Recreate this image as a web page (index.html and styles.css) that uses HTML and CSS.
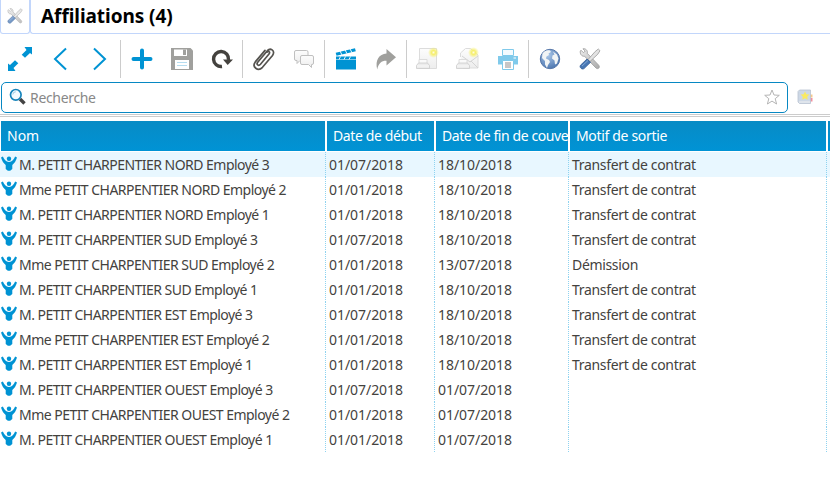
FILE: index.html
```html
<!DOCTYPE html>
<html lang="fr">
<head>
<meta charset="utf-8">
<title>Affiliations</title>
<link rel="stylesheet" href="styles.css">
</head>
<body>
<svg class="defs" aria-hidden="true">
  <defs>
    <linearGradient id="steel" x1="0" y1="0" x2="1" y2="1"><stop offset="0" stop-color="#eee"/><stop offset="1" stop-color="#aaa"/></linearGradient>
    <linearGradient id="paper" x1="0" y1="0" x2="0" y2="1"><stop offset="0" stop-color="#fdfdfd"/><stop offset="1" stop-color="#ededed"/></linearGradient>
    <radialGradient id="globe" cx=".4" cy=".3" r=".75"><stop offset="0" stop-color="#a9c6e8"/><stop offset="1" stop-color="#4a74ae"/></radialGradient>
    <radialGradient id="glow"><stop offset="0" stop-color="#fffce0"/><stop offset=".35" stop-color="#f6ef6c"/><stop offset="1" stop-color="#f6ef6c" stop-opacity="0"/></radialGradient>
  </defs>
  <symbol id="person" viewBox="0 0 16 15"><circle cx="8" cy="2.700" r="2.200"/><path d="M0 1.600 1.900.6C3 3.600 5 6 8 6S13 3.600 14.100.6L16 1.600C15 5 13.400 7.400 11.300 9V13C10 14.300 9 14.800 8 14.800S6 14.300 4.700 13V9C2.600 7.400 1 5 0 1.600Z"/></symbol>
  <symbol id="tools" viewBox="0 0 22 22"><path d="M2 2.200 4.500 4.700 6.200 3 3.900.8C6.500.2 9 2.500 8.300 5.400L19.700 17.200C21.500 19.500 19 21.700 17 20L5.500 8.200C2.800 8.700.8 6 1.300 3Z" fill="url(#steel)" stroke="#999" stroke-width=".8"/><path d="M19.300 1 21 2.700 18.800 6.200 11 13.500 9 11.600 16.200 3.500Z" fill="#e2e2e2" stroke="#999" stroke-width=".8"/><path d="M8 11 11.500 14.300 5 20.600C3 22 0 19.300 1.500 17.200Z" fill="#4777b4" stroke="#315b94" stroke-width=".8"/><path d="m3 18 6-5.500" stroke="#83a7d4"/></symbol>
  <symbol id="printer" viewBox="0 0 14 10"><path d="M3 5V.5h8V5" fill="#fafafa" stroke="#d4d4d4" stroke-width=".8"/><path d="M2.500 4h9l2 2.500v3h-13v-3Z" fill="#ececec" stroke="#ccc" stroke-width=".8"/><path d="M1 7h12" stroke="#f8f8f8"/></symbol>
</svg>

<header class="title">
  <div class="title-tool"><svg width="16" height="16"><use href="#tools"/></svg></div>
  <h1>Affiliations (4)</h1>
</header>

<nav class="toolbar">
  <div class="group">
    <button><svg width="24" height="24" viewBox="0 0 24 24" fill="#0093d3"><path d="M16.500 0H24v7.500l-2-1.500-5 4.800-3.300-3L18.500 3Z"/><path d="M7.500 24H0v-7.500L2 18l5-4.800 3.300 3L5.500 21Z"/></svg></button>
    <button><svg width="24" height="24" viewBox="0 0 24 24" fill="none" stroke="#0093d3" stroke-width="2"><path d="M18 1.500 7 12l11 10.500"/></svg></button>
    <button><svg width="24" height="24" viewBox="0 0 24 24" fill="none" stroke="#0093d3" stroke-width="2"><path d="m6 1.500 11 10.500L6 22.500"/></svg></button>
  </div>
  <div class="group">
    <button><svg width="24" height="24" viewBox="0 0 24 24" stroke="#0093d3" stroke-width="4" stroke-linecap="round"><path d="M3.500 12h17M12 3.500v17"/></svg></button>
    <button><svg width="24" height="24" viewBox="0 0 24 24"><path d="M1 1h19.500L23 3.500V23H1Z" fill="#a0a09d"/><path d="M4 2.500h13V9H4Z" fill="#fff"/><path d="M13 2.500h3V8h-3Z" fill="#a0a09d"/><path d="M5 13h14v9H5Z" fill="#fff"/><path d="M7 15.500h10M7 18.500h10" stroke="#b6ddf0"/></svg></button>
    <button><svg width="24" height="24" viewBox="0 0 24 24"><path d="M12 19.500A7.500 7.500 0 1 1 18.500 13" fill="none" stroke="#44423e" stroke-width="3.400"/><path d="M13 12.500h10L17.700 18Z" fill="#44423e"/></svg></button>
  </div>
  <div class="group">
    <button><svg width="24" height="24" viewBox="0 0 24 24" fill="none" stroke="#55534f" stroke-width="1.700" stroke-linecap="round"><path d="M17 7 8.500 17.300C6.500 19.500 4 17.500 5.700 15.200L14.500 4.700C18-.2 24 3.500 20.500 8.500L10.500 20.300C6 25-.5 20 3.300 14.900L13 3.400M17 7c1.500-2.200-.6-3.400-2-1.800"/></svg></button>
    <button><svg width="24" height="24" viewBox="0 0 24 24" fill="url(#paper)" stroke="#c0c0c0"><path d="M4 3.500h10.500a1.500 1.500 0 0 1 1.500 1.500v7a1.500 1.500 0 0 1-1.500 1.500H8L5 16.500v-3H4A1.500 1.500 0 0 1 2.500 12V5A1.500 1.500 0 0 1 4 3.500Z"/><path d="M10 8.500h10a1.500 1.500 0 0 1 1.500 1.500v6a1.500 1.500 0 0 1-1.500 1.500h-.5v3l-3-3H10A1.500 1.500 0 0 1 8.500 16v-6A1.500 1.500 0 0 1 10 8.500Z"/></svg></button>
  </div>
  <div class="group">
    <button><svg width="24" height="24" viewBox="0 0 24 24"><path d="M2 9.500h20v13H2Z" fill="#0093d3"/><path d="M1.700 5.800 21 1.200l.8 3L2.500 8.800Z" fill="#0093d3"/><path d="m6 4 2 4m3-5.300 2 4M16 1.800l2 4M6.500 9.500l-1.500 3m6.500-3-1.500 3m6.500-3-1.500 3" stroke="#fff" stroke-width=".9"/><path d="M2 12.500h20" stroke="#fff" stroke-width=".5"/></svg></button>
    <button><svg width="24" height="24" viewBox="0 0 24 24"><path d="M12.500 2 22 10.200l-9.500 8.300v-4.700C8 13.600 4.500 16 3.200 22.500 1 13 5 7 12.500 6.500Z" fill="#a0a09d"/></svg></button>
  </div>
  <div class="group">
    <button><svg width="24" height="24" viewBox="0 0 24 24"><path d="M3.500 1.500h17v20h-17Z" fill="url(#paper)" stroke="#dcdcdc"/><use href="#printer" x="0" y="12" width="14" height="10"/><circle cx="17.500" cy="5.500" r="5.500" fill="url(#glow)"/></svg></button>
    <button><svg width="24" height="24" viewBox="0 0 24 24"><path d="M4.500 10V6l5-4.500h5L22 8v13H7" fill="url(#paper)" stroke="#dcdcdc"/><path d="m6 9 8 6 8-6M22 21l-7-7" fill="none" stroke="#d4d4d4"/><use href="#printer" x="0" y="12" width="14" height="10"/><circle cx="17.500" cy="5.500" r="5.500" fill="url(#glow)"/></svg></button>
    <button><svg width="24" height="24" viewBox="0 0 24 24"><path d="M6.500 2.500h11v6h-11Z" fill="#f4fbff" stroke="#80caeb"/><path d="M2 9h20v8.500H2Z" fill="#80caeb"/><path d="M17.500 11h2.500" stroke="#fff"/><path d="M6.500 13.500h11v9h-11Z" fill="#fff" stroke="#80caeb"/><path d="M9 15h6v6H9Z" fill="#c8c6c6"/></svg></button>
  </div>
  <div class="group">
    <button><svg width="24" height="24" viewBox="0 0 24 24"><circle cx="12" cy="12" r="9.700" fill="url(#globe)" stroke="#5576a8"/><path d="M4.500 6.500C7 3 9.500 3 12 3.400L13 5l-2.500 1.500L11 8 8.500 9.500 8 11.500l3 1.500 1 2-2 3-1 3-2-3.500V14L4 11Zm10.500-2 4 3 1.500 4-1.500 5-2 1-.5-4-2.500-2 .5-3 2-1Z" fill="#f1f4f5"/></svg></button>
    <button><svg width="22" height="22"><use href="#tools"/></svg></button>
  </div>
</nav>

<div class="search-row">
  <div class="search">
    <svg width="18" height="18" viewBox="0 0 18 18"><path d="m11 11 4.500 4.500" stroke="#444" stroke-width="3.400"/><circle cx="6.800" cy="6.800" r="5.300" fill="#f5fbff" stroke="#1784bb" stroke-width="1.700"/><path d="M3.800 6.500a3 3 0 0 1 3-2.700" fill="none" stroke="#9ccbe4"/></svg>
    <span class="hint">Recherche</span>
    <svg class="star" width="16" height="16" viewBox="0 0 16 16"><path d="m8 1 2 5 5.300.3-4.100 3.400L12.600 15 8 12.100 3.400 15l1.400-5.300L.7 6.300 6 6Z" fill="#fff" stroke="#b5b5b5"/></svg>
  </div>
  <svg class="book" width="16" height="16" viewBox="0 0 16 16"><path d="M13 5.500h2.500v3H13Z" fill="#f5c98c"/><path d="M13 9h2.500v3.500H13Z" fill="#f08f9c"/><path d="M2.500 1h11v13.500h-11L1 13V2.500Z" fill="#cdd8e6" stroke="#b9c3d0" stroke-width=".8"/><path d="M2 13h11" stroke="#f1f1f1"/><path d="m8 2.500 1.400 2.700 3 .4-2.200 2.100.5 3L8 9.300l-2.700 1.400.5-3-2.200-2.100 3-.4Z" fill="#f9ea62"/></svg>
</div>

<main class="table">
  <div class="row head"><span>Nom</span><span>Date de début</span><span>Date de fin de couve</span><span>Motif de sortie</span><span></span></div>
  <div class="row selected"><span><svg><use href="#person"/></svg>M. PETIT CHARPENTIER NORD Employé 3</span><span>01/07/2018</span><span>18/10/2018</span><span>Transfert de contrat</span></div>
  <div class="row"><span><svg><use href="#person"/></svg>Mme PETIT CHARPENTIER NORD Employé 2</span><span>01/01/2018</span><span>18/10/2018</span><span>Transfert de contrat</span></div>
  <div class="row"><span><svg><use href="#person"/></svg>M. PETIT CHARPENTIER NORD Employé 1</span><span>01/01/2018</span><span>18/10/2018</span><span>Transfert de contrat</span></div>
  <div class="row"><span><svg><use href="#person"/></svg>M. PETIT CHARPENTIER SUD Employé 3</span><span>01/07/2018</span><span>18/10/2018</span><span>Transfert de contrat</span></div>
  <div class="row"><span><svg><use href="#person"/></svg>Mme PETIT CHARPENTIER SUD Employé 2</span><span>01/01/2018</span><span>13/07/2018</span><span>Démission</span></div>
  <div class="row"><span><svg><use href="#person"/></svg>M. PETIT CHARPENTIER SUD Employé 1</span><span>01/01/2018</span><span>18/10/2018</span><span>Transfert de contrat</span></div>
  <div class="row"><span><svg><use href="#person"/></svg>M. PETIT CHARPENTIER EST Employé 3</span><span>01/07/2018</span><span>18/10/2018</span><span>Transfert de contrat</span></div>
  <div class="row"><span><svg><use href="#person"/></svg>Mme PETIT CHARPENTIER EST Employé 2</span><span>01/01/2018</span><span>18/10/2018</span><span>Transfert de contrat</span></div>
  <div class="row"><span><svg><use href="#person"/></svg>M. PETIT CHARPENTIER EST Employé 1</span><span>01/01/2018</span><span>18/10/2018</span><span>Transfert de contrat</span></div>
  <div class="row"><span><svg><use href="#person"/></svg>M. PETIT CHARPENTIER OUEST Employé 3</span><span>01/07/2018</span><span>01/07/2018</span><span></span></div>
  <div class="row"><span><svg><use href="#person"/></svg>Mme PETIT CHARPENTIER OUEST Employé 2</span><span>01/01/2018</span><span>01/07/2018</span><span></span></div>
  <div class="row"><span><svg><use href="#person"/></svg>M. PETIT CHARPENTIER OUEST Employé 1</span><span>01/01/2018</span><span>01/07/2018</span><span></span></div>
</main>
</body>
</html>
```
FILE: styles.css
```css
* { box-sizing: border-box; }
body { margin: 0; background: #fff; color: #44423e; font: 14px/20px "Noto Sans", sans-serif; overflow: hidden; }
svg { display: block; flex: none; }
.defs { position: absolute; width: 0; height: 0; }

.title { display: flex; height: 34px; gap: 1px; }
.title-tool { width: 30px; border: 1px solid #c2d6fb; border-top: 0; border-radius: 0 0 3px 3px; padding: 8px 0 0 6px; }
.title-tool svg { opacity: .75; }
.title h1 { flex: 1; margin: 0 0 0 -1px; padding-left: 10px; border-bottom: 1px solid #c2d6fb; border-left: 1px solid #c2d6fb; border-radius: 0 0 0 3px; color: #000; font-size: 19px; line-height: 32px; font-weight: 700; letter-spacing: -.06px; }

.toolbar { display: flex; height: 48px; padding: 6px 0 4px; }
.group { display: flex; }
.group + .group { border-left: 1px solid #ccc; padding-left: 1px; }
.toolbar button { display: flex; align-items: center; justify-content: center; width: 40px; padding: 0; border: 0; background: none; }

.search-row { display: flex; align-items: center; height: 35px; padding: 0 0 4px 1px; border-bottom: 1px solid #ccc; background: linear-gradient(#ccc, #ccc) 0 32px / 100% 1px no-repeat; }
.search { display: flex; align-items: center; width: 787px; height: 31px; padding: 0 7px; border: 1px solid #0788c3; border-radius: 5px; background: #fff; }
.hint { flex: 1; padding: 2px 0 0 3px; color: #888; letter-spacing: -.33px; }
.book { margin-left: 9px; }

.table { padding-top: 4px; }
.row { display: grid; grid-template-columns: 326px 109px 134px 258px 3px; height: 25px; line-height: 25px; }
.row > span { display: flex; overflow: hidden; white-space: nowrap; padding-left: 3px; border-right: 1px dotted #8fd3f0; letter-spacing: -.05px; }
.row > span:first-child { padding-left: 1px; letter-spacing: -.53px; }
.row > span:nth-child(4) { letter-spacing: -.33px; }
.row svg { width: 16px; height: 15px; margin: 4px 2px 0 0; fill: #0093d3; }
.selected { background: #e8f7ff; }
.head { height: 30px; margin: 0 0 1px 1px; grid-template-columns: 324px 107px 132px 256px 2px; column-gap: 2px; line-height: 30px; color: #fff; }
.head > span, .head > span:first-child { display: block; padding-left: 6px; border: 0; background: linear-gradient(#088bc5, #0093d5); letter-spacing: -.38px; }
.head > span:first-child { letter-spacing: 0; }
.head > span:nth-child(3) { letter-spacing: -.42px; }
```
